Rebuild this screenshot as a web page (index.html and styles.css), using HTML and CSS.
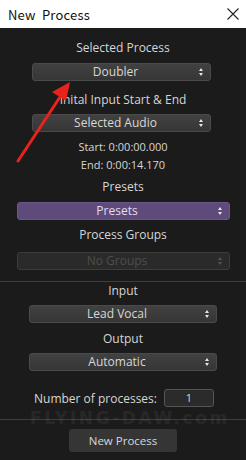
FILE: index.html
```html
<!DOCTYPE html>
<html lang="en">
<head>
  <meta charset="utf-8">
  <title>New Process</title>
  <link rel="stylesheet" href="styles.css">
</head>
<body>
  <div class="window">
    <div class="titlebar">
      <span class="title">New&nbsp; Process</span>
      <svg class="close" width="12" height="12" viewBox="0 0 12 12"><path d="M0.5 0.5L11.5 11.5M11.5 0.5L0.5 11.5" stroke="#222" stroke-width="1.1"/></svg>
    </div>

    <div class="panel">
      <div class="label l1">Selected Process</div>
      <div class="select narrow s1">Doubler<span class="updown"></span></div>

      <div class="label l2">Inital Input Start &amp; End</div>
      <div class="select narrow s2">Selected Audio<span class="updown"></span></div>

      <div class="info start">Start: 0:00:00.000</div>
      <div class="info end">End: 0:00:14.170</div>

      <div class="label l3">Presets</div>
      <div class="select wide purple s3">Presets<span class="updown"></span></div>

      <div class="label l4">Process Groups</div>
      <div class="select wide disabled s4">No Groups<span class="updown"></span></div>

      <div class="rule r1"></div>

      <div class="label l5">Input</div>
      <div class="select mid s5">Lead Vocal<span class="updown"></span></div>

      <div class="label l6">Output</div>
      <div class="select mid s6">Automatic<span class="updown"></span></div>

      <div class="count">
        <span class="count-label">Number of processes:</span>
        <span class="count-box">1</span>
      </div>

      <div class="rule r2"></div>

      <div class="button">New Process</div>
    </div>

    <div class="watermark">FLYING-DAW.com</div>

    <svg class="pointer" width="246" height="460" viewBox="0 0 246 460">
      <path d="M18 161L62 94" stroke="#e8231b" stroke-width="3" stroke-linecap="round"/>
      <path d="M70 82L52 92L66 101Z" fill="#e8231b"/>
    </svg>
  </div>
</body>
</html>
```

FILE: styles.css
```css
body {margin:0; background:#1c1b1b;}

.window {position:relative; width:246px; height:460px; overflow:hidden; background:#1c1b1b; font-family:"Open Sans","Noto Sans",sans-serif; color:#d6d6d6;}

.titlebar {height:28px; background:#fff; display:flex; align-items:center; justify-content:space-between; padding:0 7px 0 8px;}
.title {font-family:"Noto Sans CJK SC","Noto Sans",sans-serif; font-size:13px; color:#111; letter-spacing:0.2px;}
.close {display:block;}

.panel {display:flex; flex-direction:column; align-items:center; padding-top:12px;}

.label {font-size:12px; line-height:16px; height:16px; text-align:center;}
.info {font-size:11px; line-height:16px; height:16px; text-align:center;}

.select {position:relative; box-sizing:border-box; height:18px; line-height:16px; font-size:12px; text-align:center; padding-right:12px; border:1px solid #4a4a4a; border-radius:3px; background:linear-gradient(#414141,#363636); color:#d8d8d8;}
.narrow {width:179px; margin-left:-3px;}
.wide {width:213px;}
.mid {width:188px;}
.purple {background:#5e4b7c; border-color:#6a5889; color:#e2dcea;}
.disabled {background:#2a2a2a; border-color:#3c3c3c; color:#4e4e4e;}

.updown {position:absolute; right:6px; top:4px; width:5px; height:8px;}
.updown::before, .updown::after {content:""; position:absolute; left:0; border-left:2.5px solid transparent; border-right:2.5px solid transparent;}
.updown::before {top:0; border-bottom:3.5px solid #e6e6e6;}
.updown::after {bottom:0; border-top:3.5px solid #e6e6e6;}
.disabled .updown::before {border-bottom-color:#555;}
.disabled .updown::after {border-top-color:#555;}

.rule {align-self:stretch; height:1px; background:#3e3e3e;}

.s1 {margin-top:7px;}
.l2 {margin-top:11px;}
.s2 {margin-top:6px;}
.start {margin-top:7px;}
.end {margin-top:2px;}
.l3 {margin-top:6px;}
.s3 {margin-top:7px;}
.l4 {margin-top:7px;}
.s4 {margin-top:9px;}
.r1 {margin-top:11px;}
.l5 {margin-top:1px;}
.s5 {margin-top:6px;}
.l6 {margin-top:8px;}
.s6 {margin-top:6px;}

.count {display:flex; align-items:center; gap:7px; margin-top:18px; height:18px; margin-left:2px;}
.count-label {font-size:12px;}
.count-box {box-sizing:border-box; width:50px; height:18px; line-height:16px; border:1px solid #555; border-radius:3px; background:#2b2b2b; font-size:11px; text-align:center;}

.r2 {margin-top:12px;}

.button {margin-top:9px; box-sizing:border-box; width:108px; height:23px; line-height:23px; border-radius:3px; background:#353535; font-size:11.5px; text-align:center; color:#d8d8d8;}

.watermark {position:absolute; left:30px; top:409px; font-family:"DejaVu Sans",sans-serif; font-weight:bold; font-size:17px; line-height:18px; letter-spacing:2.6px; color:#ffffff; opacity:0.05;}

.pointer {position:absolute; left:0; top:0; pointer-events:none;}
```
